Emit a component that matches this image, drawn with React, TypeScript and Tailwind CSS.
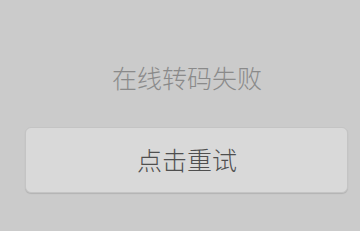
export default function App() {
  return (
    <div
      className="w-[360px] h-[231px] bg-[#cbcbcb] flex flex-col"
      style={{ fontFamily: '"Noto Sans CJK SC", "Noto Sans", sans-serif' }}
    >
      <div className="h-[127px] flex flex-col items-center pl-[14px] pt-[61px]">
        <span className="text-[25px] leading-[32px] font-light text-[#8a8a8a]">在线转码失败</span>
      </div>
      <div className="pl-[25px] pr-[12px]">
        <button className="w-full h-[66px] rounded-[6px] bg-[#d9d9d9] border border-[#c4c4c4] shadow-[0_1px_1px_rgba(0,0,0,0.12)] flex items-center justify-center">
          <span className="text-[25px] leading-[32px] font-light text-[#4f4f4f] -mt-[3px] ml-[1px]">点击重试</span>
        </button>
      </div>
    </div>
  );
}
